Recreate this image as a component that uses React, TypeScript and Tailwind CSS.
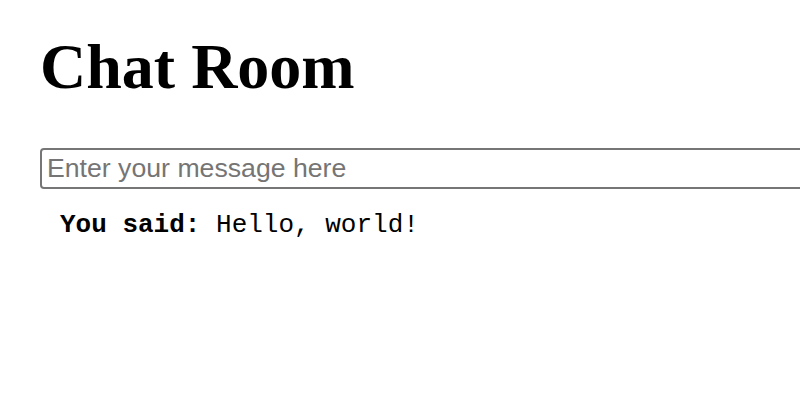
export default function App() {
  return (
    <div className="w-full h-[400px] overflow-hidden bg-white">
      <div className="pl-10 pt-[35px]">
        <h1 className="text-[64px] leading-[64px] font-bold text-black font-['Liberation_Serif',serif]">
          Chat Room
        </h1>

        {/* message box runs off the right edge */}
        <input
          type="text"
          placeholder="Enter your message here"
          className="mt-[49px] block w-[820px] h-[41px] border-2 border-[#767676] rounded-[4px] pl-[5px] text-[26.67px] text-black placeholder:text-[#757575] font-['Liberation_Sans',Arial,sans-serif] outline-none"
        />

        <p className="mt-[23px] ml-5 text-[26px] leading-[26px] text-black font-['Liberation_Mono',monospace] whitespace-pre">
          <b>You said:</b> Hello, world!
        </p>
      </div>
    </div>
  );
}
